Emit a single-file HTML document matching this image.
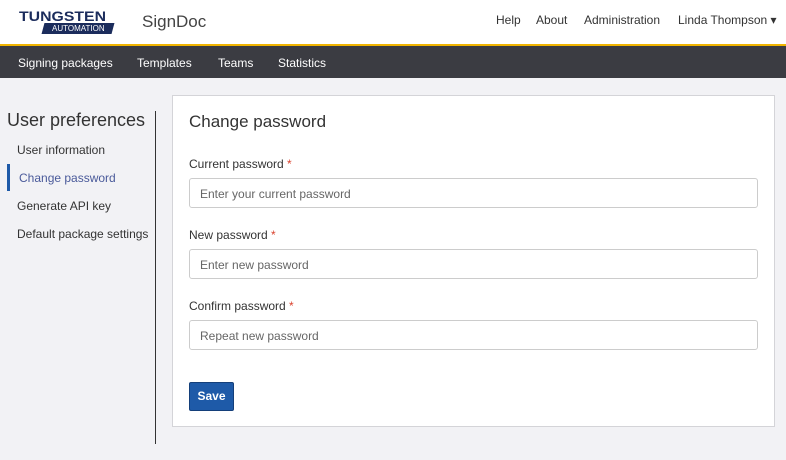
<!DOCTYPE html>
<html><head><style>
*{box-sizing:border-box;margin:0;padding:0}
body{width:786px;height:460px;background:#f2f2f5;font-family:"Liberation Sans",sans-serif;color:#333;position:relative;overflow:hidden}
.top{position:absolute;left:0;top:0;width:786px;height:46px;background:#fff;border-bottom:2px solid #f0b400}
.nav{position:absolute;left:0;top:46px;width:786px;height:32px;background:#3b3c42;color:#fff;font-size:12px}
.nav span{position:absolute;top:10px}
.tr{position:absolute;top:13px;font-size:12px;color:#333}
.side{position:absolute;font-size:12px;color:#333}
.card{position:absolute;left:172px;top:95px;width:603px;height:332px;background:#fff;border:1px solid #d4d4d8}
.lbl{position:absolute;left:16px;font-size:12px;color:#333}
.lbl b{color:#d9422e;font-weight:normal}
.inp{position:absolute;left:16px;width:569px;height:30px;border:1px solid #ccc;border-radius:3px;font-size:12px;color:#666;padding:8px 10px}
</style></head><body>
<div class="top">
 <div style="position:absolute;left:19px;top:8px;font-weight:bold;font-size:14px;color:#1b2c5c;transform:scaleX(1.13);transform-origin:left">TUNGSTEN</div>
 <div style="position:absolute;left:43px;top:23px;width:70px;height:11px;background:#1b2c5c;color:#fff;font-size:8px;line-height:11px;text-align:center;transform:skewX(-15deg)"><span style="display:inline-block;transform:skewX(15deg)">AUTOMATION</span></div>
 <div style="position:absolute;left:142px;top:12px;font-size:17px;color:#444">SignDoc</div>
 <span class="tr" style="left:496px">Help</span>
 <span class="tr" style="left:536px">About</span>
 <span class="tr" style="left:584px">Administration</span>
 <span class="tr" style="left:678px">Linda Thompson ▾</span>
</div>
<div class="nav">
 <span style="left:18px">Signing packages</span>
 <span style="left:137px">Templates</span>
 <span style="left:218px">Teams</span>
 <span style="left:278px">Statistics</span>
</div>
<div class="side" style="left:7px;top:110px;font-size:18px;color:#333">User preferences</div>
<div class="side" style="left:17px;top:143px">User information</div>
<div style="position:absolute;left:7px;top:164px;width:3px;height:27px;background:#1e5aa8"></div>
<div class="side" style="left:19px;top:171px;color:#4a5a9a">Change password</div>
<div class="side" style="left:17px;top:199px">Generate API key</div>
<div class="side" style="left:17px;top:227px">Default package settings</div>
<div style="position:absolute;left:155px;top:111px;width:1px;height:333px;background:#333"></div>
<div class="card">
 <div style="position:absolute;left:16px;top:16px;font-size:17px;color:#333">Change password</div>
 <div class="lbl" style="top:61px">Current password <b>*</b></div>
 <div class="inp" style="top:82px">Enter your current password</div>
 <div class="lbl" style="top:132px">New password <b>*</b></div>
 <div class="inp" style="top:153px">Enter new password</div>
 <div class="lbl" style="top:203px">Confirm password <b>*</b></div>
 <div class="inp" style="top:224px">Repeat new password</div>
 <div style="position:absolute;left:16px;top:286px;width:45px;height:29px;background:#1e5aa8;border:1px solid #143f7a;border-radius:2px;color:#fff;font-size:12px;font-weight:bold;text-align:center;line-height:27px">Save</div>
</div>
</body></html>
